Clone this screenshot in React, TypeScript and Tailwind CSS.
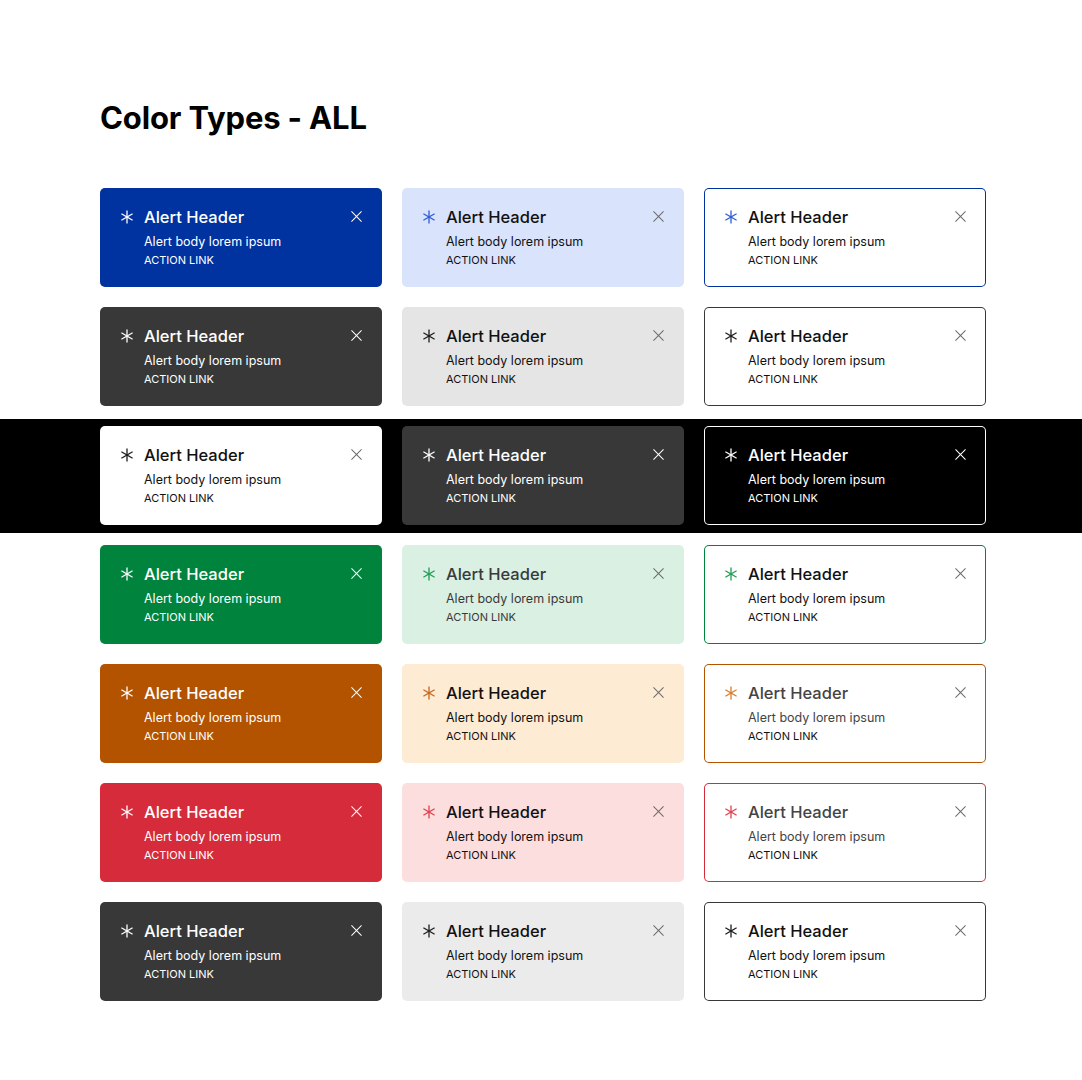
type Variant = {
  card: string;
  icon: string;
  head: string;
  body: string;
  link: string;
  close: string;
};

function Asterisk({ className }: { className: string }) {
  return (
    <svg viewBox="0 0 14 14" className={className} fill="none" stroke="currentColor" strokeWidth="1.3" strokeLinecap="butt">
      <path d="M7 0.5v13" />
      <path d="M1.4 3.75l11.2 6.5" />
      <path d="M1.4 10.25l11.2-6.5" />
    </svg>
  );
}

function Close({ className }: { className: string }) {
  return (
    <svg viewBox="0 0 12 12" className={className} fill="none" stroke="currentColor" strokeWidth="1.1">
      <path d="M0.5 0.5l11 11M11.5 0.5l-11 11" />
    </svg>
  );
}

function Alert({ v }: { v: Variant }) {
  return (
    <div className={`flex h-[99px] items-start rounded-[5px] pl-5 pr-5 pt-[17px] ${v.card}`}>
      <div className="flex h-[24px] items-center">
        <Asterisk className={`h-[14px] w-[14px] ${v.icon}`} />
      </div>
      <div className="ml-[10px] flex flex-1 flex-col">
        <div className={`text-[16.5px] font-medium leading-[24px] ${v.head}`}>Alert Header</div>
        <div className={`mt-[4px] text-[12.5px] leading-[18px] ${v.body}`}>Alert body lorem ipsum</div>
        <div className={`mt-[1px] text-[11px] leading-[16px] ${v.link}`}>ACTION LINK</div>
      </div>
      <div className="flex h-[22px] items-center">
        <Close className={`h-[11px] w-[11px] ${v.close}`} />
      </div>
    </div>
  );
}

const solidWhite = { icon: 'text-white', head: 'text-white', body: 'text-white', link: 'text-white', close: 'text-white' };
const lightDark = { icon: 'text-[#1c1c1c]', head: 'text-[#111]', body: 'text-[#111]', link: 'text-[#111]', close: 'text-[#6b6b6b]' };

const rows: Variant[][] = [
  [
    { card: 'bg-[#0033a0]', ...solidWhite },
    { card: 'bg-[#d9e3fc]', ...lightDark, icon: 'text-[#2f5bd3]' },
    { card: 'bg-white ring-1 ring-inset ring-[#0033a0]', ...lightDark, icon: 'text-[#2f5bd3]' },
  ],
  [
    { card: 'bg-[#383838]', ...solidWhite },
    { card: 'bg-[#e5e5e5]', ...lightDark },
    { card: 'bg-white ring-1 ring-inset ring-[#383838]', ...lightDark },
  ],
  [
    { card: 'bg-white', ...lightDark },
    { card: 'bg-[#383838]', ...solidWhite },
    { card: 'bg-black ring-1 ring-inset ring-white', ...solidWhite },
  ],
  [
    { card: 'bg-[#00843d]', ...solidWhite },
    { card: 'bg-[#d9f0e3]', ...lightDark, icon: 'text-[#1f9a55]', head: 'text-[#3a3a3a]', body: 'text-[#3a3a3a]', link: 'text-[#3a3a3a]' },
    { card: 'bg-white ring-1 ring-inset ring-[#00843d]', ...lightDark, icon: 'text-[#1f9a55]' },
  ],
  [
    { card: 'bg-[#b35300]', ...solidWhite },
    { card: 'bg-[#fdebd3]', ...lightDark, icon: 'text-[#c7671a]' },
    { card: 'bg-white ring-1 ring-inset ring-[#b35300]', ...lightDark, icon: 'text-[#d97a2b]', head: 'text-[#444]', body: 'text-[#444]' },
  ],
  [
    { card: 'bg-[#d52b3a]', ...solidWhite },
    { card: 'bg-[#fcdede]', ...lightDark, icon: 'text-[#e0404e]' },
    { card: 'bg-white ring-1 ring-inset ring-[#d52b3a]', ...lightDark, icon: 'text-[#e0404e]', head: 'text-[#444]', body: 'text-[#444]' },
  ],
  [
    { card: 'bg-[#383838]', ...solidWhite },
    { card: 'bg-[#ebebeb]', ...lightDark },
    { card: 'bg-white ring-1 ring-inset ring-[#383838]', ...lightDark },
  ],
];

export default function App() {
  return (
    <div className="min-h-[1080px] w-[1082px] bg-white pl-[100px] pt-[98px] font-['Inter',sans-serif]">
      <h1 className="mb-[50px] text-[31px] font-bold leading-[40px] tracking-[-0.005em] text-black">Color Types - ALL</h1>
      <div className="flex flex-col gap-5">
        {rows.map((row, i) => (
          <div
            key={i}
            className={
              i === 2
                ? '-mb-[8px] -ml-[100px] -mt-[7px] bg-black pb-[8px] pl-[100px] pt-[7px]'
                : ''
            }
          >
            <div className="grid grid-cols-[282px_282px_282px] gap-5">
              {row.map((v, j) => (
                <Alert key={j} v={v} />
              ))}
            </div>
          </div>
        ))}
      </div>
    </div>
  );
}
